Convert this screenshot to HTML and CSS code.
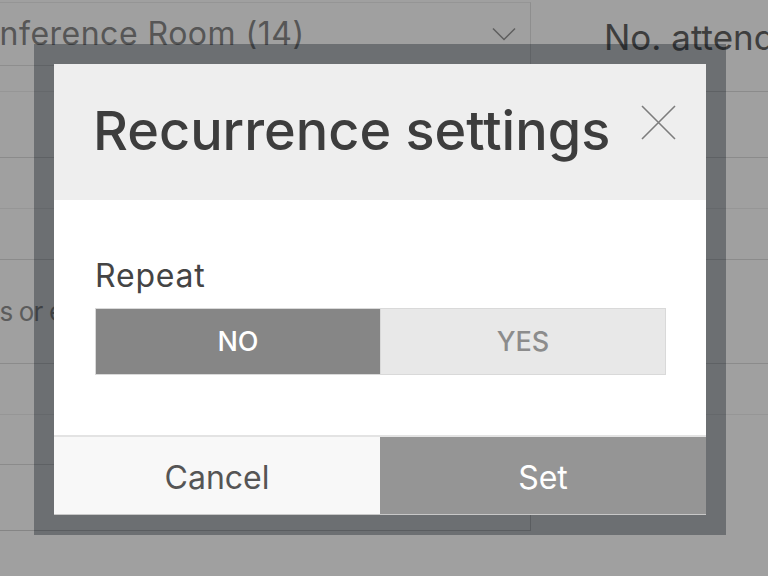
FILE: index.html
```html
<!DOCTYPE html>
<html lang="en">
<head>
<meta charset="utf-8">
<title>Recurrence settings</title>
<link rel="stylesheet" href="styles.css">
</head>
<body>
<div class="page">
  <div class="col-left">
    <div class="select">
      <span class="select-text">Conference Room (14)</span>
      <svg class="chev" width="24" height="14" viewBox="0 0 24 14"><polyline points="1,1.5 12,12.5 23,1.5" fill="none" stroke="#5f5f5f" stroke-width="1.5"/></svg>
    </div>
    <div class="row h26"></div>
    <div class="row h66 dark"></div>
    <div class="row h51"></div>
    <div class="row h51 dark"></div>
    <div class="row h104 dark"><span class="hint">Enter names or emails</span></div>
    <div class="row h51"></div>
    <div class="row h50 dark"></div>
    <div class="box"></div>
  </div>
  <div class="col-right">
    <div class="head">No. attendees</div>
    <div class="row h66 dark"></div>
    <div class="row h51"></div>
    <div class="row h51 dark"></div>
    <div class="row h104 dark"></div>
    <div class="row h51"></div>
  </div>
</div>

<div class="modal-frame">
  <div class="modal">
    <div class="modal-header">
      <h1 class="modal-title">Recurrence settings</h1>
      <button class="close" aria-label="Close">
        <svg width="35" height="35" viewBox="0 0 35 35"><path d="M1 1 L34 34 M34 1 L1 34" stroke="#7d7d7d" stroke-width="1.6" fill="none"/></svg>
      </button>
    </div>
    <div class="modal-body">
      <div class="label">Repeat</div>
      <div class="toggle">
        <button class="opt opt-on">NO</button>
        <button class="opt opt-off">YES</button>
      </div>
    </div>
    <div class="modal-footer">
      <button class="btn btn-cancel">Cancel</button>
      <button class="btn btn-set">Set</button>
    </div>
  </div>
</div>
</body>
</html>
```

FILE: styles.css
```css
html, body {
  margin: 0;
  padding: 0;
}
body {
  width: 768px;
  height: 576px;
  overflow: hidden;
  background: #a0a0a0;
  font-family: "Inter", "Lato", "Liberation Sans", sans-serif;
  position: relative;
}

/* background page */
.page {
  display: flex;
  height: 576px;
  overflow: hidden;
}
.col-left {
  width: 531px;
  flex: none;
  overflow: hidden;
}
.col-right {
  flex: 1;
  min-width: 0;
  overflow: hidden;
}
.select {
  margin-top: 2px;
  height: 64px;
  box-sizing: border-box;
  border-top: 1px solid #959595;
  border-right: 1px solid #8e8e8e;
  border-bottom: 1px solid #8e8e8e;
  display: flex;
  align-items: center;
  justify-content: space-between;
  padding-right: 14px;
  overflow: hidden;
}
.select-text {
  font-size: 32px;
  letter-spacing: 0.5px;
  line-height: 1.2;
  color: #565656;
  margin-left: -44px;
  white-space: nowrap;
}
.chev {
  display: block;
  flex: none;
}
.row {
  box-sizing: border-box;
  border-bottom: 1px solid #969696;
}
.row.dark {
  border-bottom-color: #8b8b8b;
}
.h26 { height: 26px; }
.h50 { height: 50px; }
.h51 { height: 51px; }
.h66 { height: 66px; }
.h104 {
  height: 104px;
  display: flex;
  align-items: center;
  overflow: hidden;
}
.hint {
  font-size: 26px;
  letter-spacing: -0.8px;
  line-height: 1.2;
  color: #5c5c5c;
  white-space: nowrap;
  margin-left: -132px;
}
.box {
  height: 66px;
  box-sizing: border-box;
  border-bottom: 1px solid #858585;
  border-right: 1px solid #858585;
}
.head {
  height: 92px;
  box-sizing: border-box;
  border-bottom: 1px solid #8b8b8b;
  padding: 16px 0 0 73px;
  font-size: 35px;
  line-height: 1.2;
  color: #3e3e3e;
  white-space: nowrap;
  overflow: hidden;
}

/* modal */
.modal-frame {
  position: absolute;
  left: 34px;
  top: 44px;
  width: 692px;
  height: 491px;
  box-sizing: border-box;
  padding: 20px;
  background: rgba(0, 10, 20, 0.32);
}
.modal {
  height: 100%;
  display: flex;
  flex-direction: column;
  background: #ffffff;
}
.modal-header {
  height: 136px;
  flex: none;
  background: #eeeeee;
  display: flex;
  align-items: center;
  justify-content: space-between;
  padding: 0 30px 0 39px;
}
.modal-title {
  margin: 0 0 2px 0;
  font-size: 54px;
  font-weight: 500;
  line-height: 1.2;
  color: #3d3d3d;
  white-space: nowrap;
}
.close {
  border: none;
  background: none;
  padding: 0;
  margin-bottom: 20px;
  width: 35px;
  height: 35px;
}
.close svg {
  display: block;
}
.modal-body {
  flex: 1;
  padding: 57px 40px 0 41px;
}
.label {
  font-size: 32px;
  letter-spacing: 0.8px;
  line-height: 1.2;
  color: #444444;
}
.toggle {
  margin-top: 13px;
  height: 67px;
  box-sizing: border-box;
  display: flex;
  border: 1px solid #d9d9d9;
}
.opt {
  flex: 1;
  border: none;
  padding: 0;
  margin: 0;
  font-family: inherit;
  font-size: 27px;
  font-weight: 500;
}
.opt-on {
  background: #868686;
  color: #ffffff;
}
.opt-off {
  background: #e8e8e8;
  color: #8c8c8c;
  border-left: 1px solid #d9d9d9;
}
.modal-footer {
  height: 80px;
  flex: none;
  box-sizing: border-box;
  border-top: 2px solid #e3e3e3;
  border-bottom: 1px solid #c8c8c8;
  display: flex;
}
.btn {
  flex: 1;
  border: none;
  padding: 4px 0 0 0;
  margin: 0;
  font-family: inherit;
  font-size: 32px;
  font-weight: 400;
}
.btn-cancel {
  background: #f8f8f8;
  color: #555555;
}
.btn-set {
  background: #959595;
  color: #ffffff;
}
```
